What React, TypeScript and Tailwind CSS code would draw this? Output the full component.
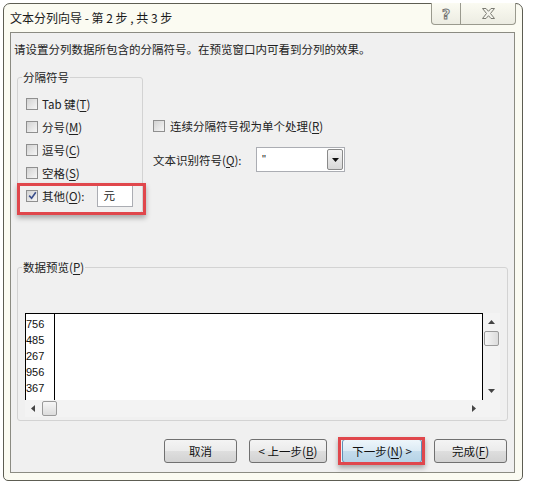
import React from "react";

const FONT = "font-['Microsoft_YaHei','Noto_Sans_CJK_SC',sans-serif]";

function CheckBox({ checked }: { checked?: boolean }) {
  return (
    <span className="flex h-[12px] w-[12px] shrink-0 items-center justify-center border border-[#8f8f8f] bg-[linear-gradient(135deg,#d2d2d2,#f6f6f6)]">
      {checked && (
        <svg width="9" height="9" viewBox="0 0 9 9">
          <path d="M1.2 4.6 L3.6 7.2 L7.8 1.2" fill="none" stroke="#3b4f8c" strokeWidth="1.6" />
        </svg>
      )}
    </span>
  );
}

function Option({ label, hot }: { label: string; hot: string }) {
  return (
    <div className="flex h-[23px] items-center">
      <CheckBox />
      <span className="ml-[4px] text-[11.5px] leading-[16px] text-[#222]">
        {label}(<span className="underline underline-offset-2">{hot}</span>)
      </span>
    </div>
  );
}

function WinButton({ children, width, focused }: { children: React.ReactNode; width: string; focused?: boolean }) {
  return (
    <button
      className={
        focused
          ? "flex h-[24px] items-center justify-center rounded-[3px] border border-[#5f8fb6] bg-[linear-gradient(#eef6fb,#dbeaf4_50%,#c4dcec_51%,#b6d3e6)] text-[11.5px] leading-[16px] text-[#111] " + width
          : "flex h-[24px] items-center justify-center rounded-[3px] border border-[#707070] bg-[linear-gradient(#f4f4f4,#ebebeb_50%,#dedede_51%,#d2d2d2)] text-[11.5px] leading-[16px] text-[#111] " + width
      }
    >
      {children}
    </button>
  );
}

const rows = ["756", "485", "267", "956", "367"];

export default function App() {
  return (
    <div className={"h-[491px] w-[535px] bg-white pl-[3px] pt-[3px] " + FONT}>
      <div className="relative flex h-[478px] w-[520px] flex-col rounded-t-[7px] rounded-b-[5px] border border-[#5d5d52] bg-[#fbfbf2]">
        {/* title bar */}
        <div className="flex h-[28px] items-center pl-[6px] text-[12px] leading-[16px] text-[#1a1a1a]">
          文本分列向导 - 第 2 步 , 共 3 步
        </div>
        <div className="absolute right-[6px] top-[-1px] flex h-[22px]">
          <div className="flex w-[30px] items-center justify-center rounded-bl-[4px] border border-t-0 border-[#9a9a8e] bg-[linear-gradient(#fbfbf2,#ecece2)] font-['DejaVu_Sans',sans-serif] text-[14px] font-bold leading-none text-transparent [-webkit-text-stroke:1px_#777]">
            ?
          </div>
          <div className="flex w-[55px] items-center justify-center rounded-br-[4px] border border-l-0 border-t-0 border-[#9a9a8e] bg-[linear-gradient(#fbfbf2,#ecece2)]">
            <svg width="13" height="11" viewBox="0 0 13 11">
              <path
                d="M0.5 0.5 H4 L6.5 3.3 L9 0.5 H12.5 L8.5 5.5 L12.5 10.5 H9 L6.5 7.7 L4 10.5 H0.5 L4.5 5.5 Z"
                fill="#f4f4ec"
                stroke="#7a7a72"
                strokeWidth="1"
              />
            </svg>
          </div>
        </div>

        {/* client area */}
        <div className="relative ml-[6px] flex h-[441px] w-[505px] flex-col border border-[#8b8b82] bg-[#f0f0f0] text-[#222]">
          <div className="pl-[3px] pt-[8px] text-[11.5px] leading-[16px]">
            请设置分列数据所包含的分隔符号。在预览窗口内可看到分列的效果。
          </div>

          <div className="mt-[12px] flex pl-[6px]">
            <fieldset className="h-[144px] w-[126px] rounded-[3px] border border-[#d3d3d3]">
              <legend className="ml-[4px] px-[1px] text-[11.5px] leading-[16px]">分隔符号</legend>
              <div className="pl-[8px] pt-[7px]">
                <Option label="Tab 键" hot="T" />
                <Option label="分号" hot="M" />
                <Option label="逗号" hot="C" />
                <Option label="空格" hot="S" />
                <div className="flex h-[23px] items-center">
                  <CheckBox checked />
                  <span className="ml-[4px] text-[11.5px] leading-[16px]">
                    其他(<span className="underline underline-offset-2">O</span>):
                  </span>
                  <div className="ml-[12px] flex h-[22px] w-[36px] items-center border border-[#abadb3] bg-white pl-[6px] text-[11.5px]">
                    元
                  </div>
                </div>
              </div>
            </fieldset>

            <div className="ml-[10px] flex flex-col">
              <div className="mt-[49px] flex h-[16px] items-center">
                <CheckBox />
                <span className="ml-[5px] text-[11.5px] leading-[16px]">
                  连续分隔符号视为单个处理(<span className="underline underline-offset-2">R</span>)
                </span>
              </div>
              <div className="mt-[13px] flex h-[25px] items-center">
                <span className="w-[103px] text-[11.5px] leading-[16px]">
                  文本识别符号(<span className="underline underline-offset-2">Q</span>):
                </span>
                <div className="flex h-[25px] w-[89px] items-center justify-between border border-[#abadb3] bg-white pl-[5px]">
                  <span className="font-['Liberation_Sans',sans-serif] text-[11px]">"</span>
                  <div className="mr-[1px] flex h-[21px] w-[16px] items-center justify-center rounded-[2px] border border-[#8a8a8a] bg-[linear-gradient(#f4f4f4,#d8d8d8)]">
                    <svg width="7" height="4" viewBox="0 0 7 4">
                      <path d="M0 0 H7 L3.5 4 Z" fill="#111" />
                    </svg>
                  </div>
                </div>
              </div>
            </div>
          </div>

          <fieldset className="ml-[6px] mt-[46px] h-[162px] w-[491px] rounded-[3px] border border-[#d3d3d3]">
            <legend className="ml-[4px] px-[1px] text-[11.5px] leading-[16px]">
              数据预览(<span className="underline underline-offset-2">P</span>)
            </legend>
            <div className="flex w-[482px] flex-col pl-[7px] pt-[38px]">
              <div className="flex h-[87px]">
                <div className="flex w-[458px] border border-b-0 border-black bg-white">
                  <div className="flex w-[29px] flex-col border-r border-black pt-[2px] font-['Liberation_Sans',sans-serif] text-[11px] leading-[16px] text-[#111]">
                    {rows.map((r) => (
                      <div key={r}>{r}</div>
                    ))}
                  </div>
                </div>
                <div className="flex w-[17px] flex-col items-center bg-[#f3f3f3]">
                  <svg className="mt-[7px]" width="7" height="4" viewBox="0 0 7 4">
                    <path d="M0 4 H7 L3.5 0 Z" fill="#444" />
                  </svg>
                  <div className="mt-[7px] h-[15px] w-[15px] rounded-[2px] border border-[#9a9a9a] bg-[linear-gradient(90deg,#f6f6f6,#dcdcdc)]" />
                  <svg className="mt-auto mb-[7px]" width="7" height="4" viewBox="0 0 7 4">
                    <path d="M0 0 H7 L3.5 4 Z" fill="#444" />
                  </svg>
                </div>
              </div>
              <div className="flex h-[17px] items-center bg-[#f3f3f3]">
                <svg className="ml-[6px]" width="4" height="7" viewBox="0 0 4 7">
                  <path d="M4 0 V7 L0 3.5 Z" fill="#444" />
                </svg>
                <div className="ml-[7px] h-[15px] w-[15px] rounded-[2px] border border-[#9a9a9a] bg-[linear-gradient(#f6f6f6,#dcdcdc)]" />
                <svg className="ml-auto mr-[24px]" width="4" height="7" viewBox="0 0 4 7">
                  <path d="M0 0 V7 L4 3.5 Z" fill="#444" />
                </svg>
              </div>
            </div>
          </fieldset>

          <div className="mt-[18px] flex pl-[153px]">
            <WinButton width="w-[73px]">取消</WinButton>
            <div className="ml-[12px]">
              <WinButton width="w-[78px]">
                &lt; 上一步(<span className="underline underline-offset-2">B</span>)
              </WinButton>
            </div>
            <div className="ml-[15px]">
              <WinButton width="w-[80px]" focused>
                下一步(<span className="underline underline-offset-2">N</span>) &gt;
              </WinButton>
            </div>
            <div className="ml-[12px]">
              <WinButton width="w-[73px]">
                完成(<span className="underline underline-offset-2">F</span>)
              </WinButton>
            </div>
          </div>

          {/* red highlight frames */}
          <div className="absolute left-[6px] top-[150px] h-[32px] w-[129px] border-[3px] border-[#e0474c] shadow-[0_3px_5px_rgba(0,0,0,0.3)]" />
          <div className="absolute left-[327px] top-[404px] h-[28px] w-[87px] border-[3px] border-[#e0474c] shadow-[0_3px_5px_rgba(0,0,0,0.3)]" />
        </div>
      </div>
    </div>
  );
}
